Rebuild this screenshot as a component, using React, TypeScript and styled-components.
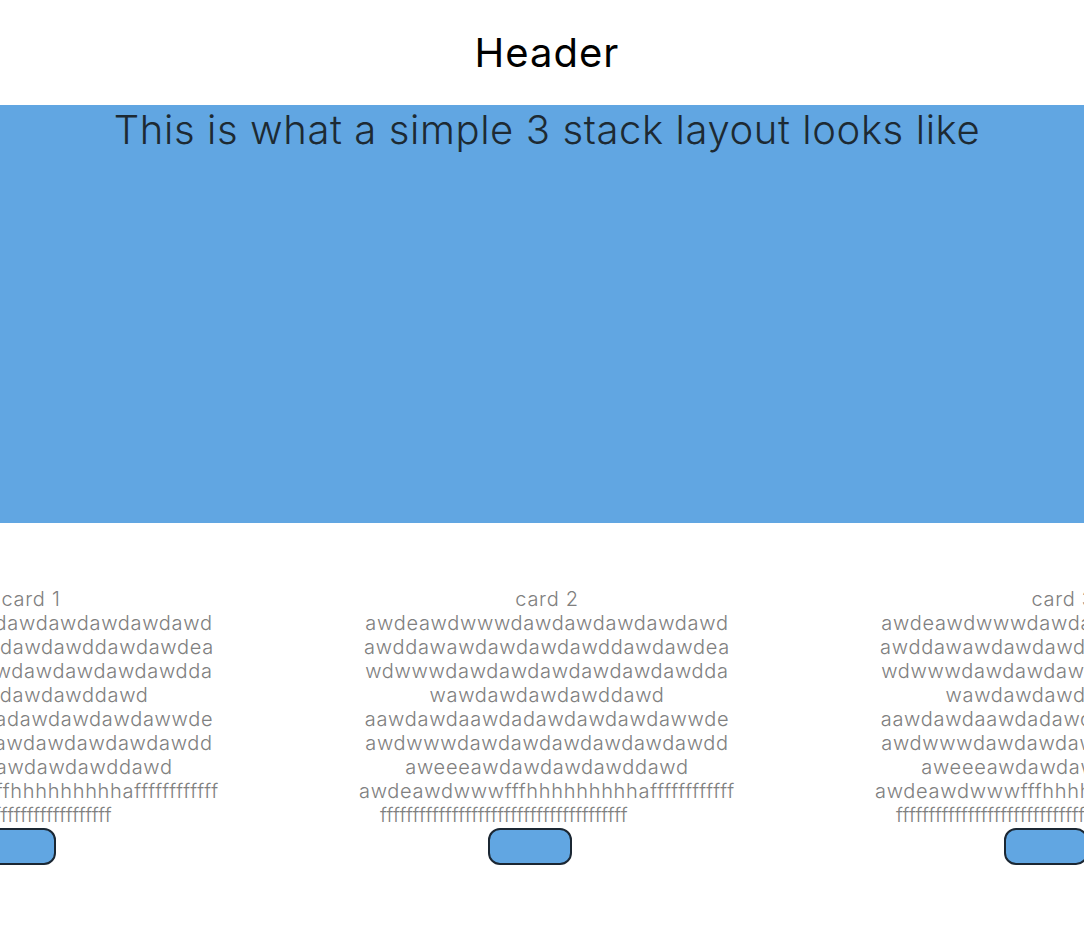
import React from "react";
import styled, { createGlobalStyle } from "styled-components";

const GlobalStyle = createGlobalStyle`
	html, body {
		margin: 0;
		padding: 0;
		background: #ffffff;
		overflow-x: hidden;
	}
	body {
		font-family: "Inter", "Liberation Sans", sans-serif;
	}
`;

const cardLines = [
	"awdeawdwwwdawdawdawdawdawd",
	"awddawawdawdawdawddawdawdea",
	"wdwwwdawdawdawdawdawdawdda",
	"wawdawdawdawddawd",
	"aawdawdaawdadawdawdawdawwde",
	"awdwwwdawdawdawdawdawdawdd",
	"aweeeawdawdawdawddawd",
	"awdeawdwwwfffhhhhhhhhhaffffffffffff",
];

const tailLine = "ffffffffffffffffffffffffffffffffffffff";

function Card(props: { title: string }) {
	return (
		<CardBox>
			<CardTitle>{props.title}</CardTitle>
			{cardLines.map((line, i) => (
				<CardLine key={i}>{line}</CardLine>
			))}
			<TailLine>{tailLine}</TailLine>
			<CardButton type="button" aria-label={`${props.title} button`} />
		</CardBox>
	);
}

export default function App() {
	return (
		<Page>
			<GlobalStyle />
			<Header>Header</Header>
			<Hero>
				<HeroTitle>This is what a simple 3 stack layout looks like</HeroTitle>
			</Hero>
			<CardRow>
				<Card title="card 1" />
				<Card title="card 2" />
				<Card title="card 3" />
			</CardRow>
		</Page>
	);
}

const Page = styled.div`
	width: 100%;
	overflow: hidden;
	padding-bottom: 70px;
`;

const Header = styled.h1`
	margin: 0;
	height: 105px;
	display: flex;
	align-items: center;
	justify-content: center;
	padding-left: 10px;
	font-size: 40px;
	font-weight: 400;
	letter-spacing: 1px;
	color: #000;
`;

const Hero = styled.section`
	height: 418px;
	background: #61a6e2;
	padding-left: 10px;
	padding-top: 1px;
	box-sizing: border-box;
`;

const HeroTitle = styled.h2`
	margin: 0;
	text-align: center;
	font-size: 40px;
	line-height: 48px;
	font-weight: 300;
	letter-spacing: 0.6px;
	color: #1d2a33;
`;

const CardRow = styled.div`
	display: flex;
	justify-content: center;
	padding-left: 10px;
	margin-top: 64px;
`;

const CardBox = styled.div`
	flex: 0 0 516px;
	display: flex;
	flex-direction: column;
	align-items: center;
	font-size: 20px;
	line-height: 24px;
	font-weight: 300;
	letter-spacing: 0.7px;
	color: #808080;
`;

const CardTitle = styled.div`
	white-space: nowrap;
`;

const CardLine = styled.div`
	white-space: nowrap;
`;

const TailLine = styled.div`
	white-space: nowrap;
	margin-right: 86px;
	letter-spacing: 0.2px;
`;

const CardButton = styled.button`
	margin-top: 1px;
	margin-right: 35px;
	width: 84px;
	height: 37px;
	border-radius: 12px;
	border: 2px solid #1b2733;
	background: #61a6e2;
	cursor: pointer;
`;
